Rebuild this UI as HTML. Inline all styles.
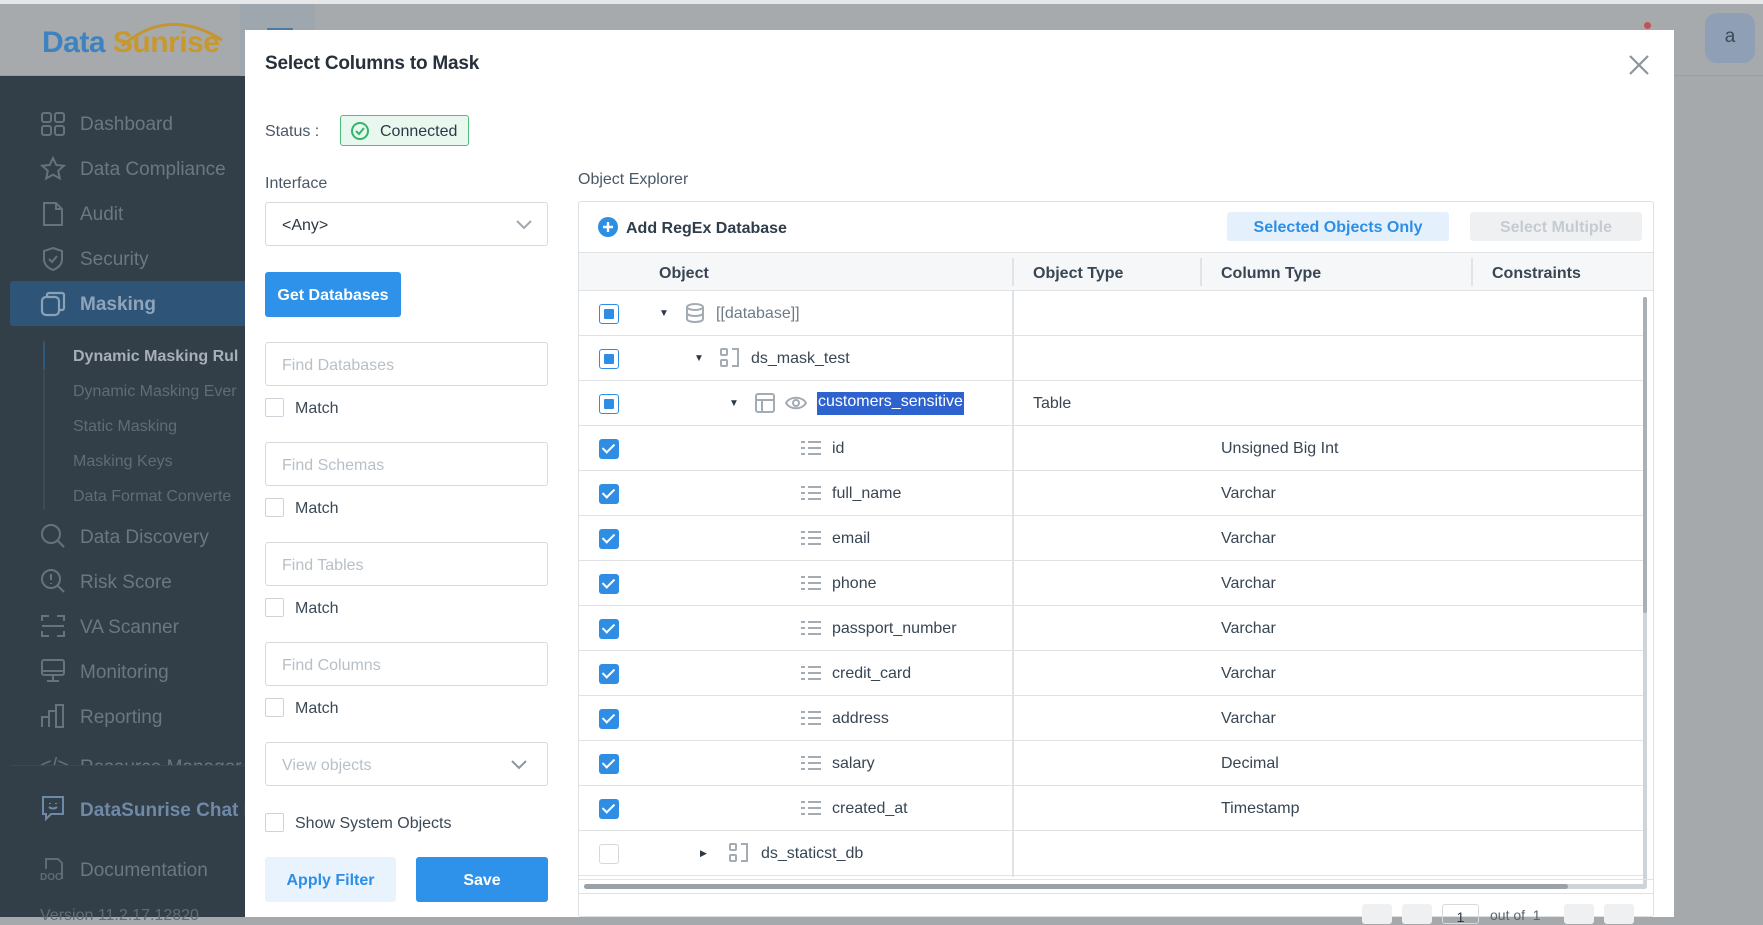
<!DOCTYPE html>
<html><head><meta charset="utf-8"><style>
*{box-sizing:border-box;margin:0;padding:0}
body{width:1763px;height:917px;overflow:hidden;position:relative;background:#a5a9ac;font-family:"Liberation Sans",sans-serif;color:#2b3a48}
.a{position:absolute}
.top{left:0;top:0;width:1763px;height:4px;background:#e6e7e8}
.hdr{left:0;top:4px;width:1763px;height:72px;background:#a6aaad;border-bottom:1px solid #9a9ea1}
.side{left:0;top:76px;width:245px;height:841px;background:#323e48}
.nav{left:80px;font-size:19px;color:#6a7884;white-space:nowrap;margin-top:2px}
.sub{left:73px;font-size:16px;color:#5f6d79;white-space:nowrap;margin-top:2px}
.ico{left:40px;width:26px;height:26px}
.modal{left:245px;top:30px;width:1429px;height:887px;background:#fff}
.lbl{font-size:16px;color:#4a5866;margin-top:2px}
.inp{left:265px;width:283px;height:44px;border:1px solid #d6dadd;border-radius:3px;font-size:16px;color:#b8c0c7;padding:14px 16px 0}
.cb{width:19px;height:19px;border:1px solid #cdd3d8;border-radius:2px;background:#fff}
.mt{font-size:16px;color:#3b4956;margin-top:2px}
.tb{left:578px;top:201px;width:1076px;height:716px;border:1px solid #dde1e4;border-radius:3px}
.row{left:579px;width:1066px;height:45px;border-bottom:1px solid #dfe3e6}
.rt{font-size:16px;color:#384654;white-space:nowrap;margin-top:2px}
.ck{left:599px;width:20px;height:20px;border-radius:3px}
.on{background:#2f8de4}
.part{border:1px solid #2f8de4;background:#fff}
.part::after{content:"";position:absolute;left:4px;top:4px;width:10px;height:10px;background:#2f8de4;border-radius:1px}
.on::after{content:"";position:absolute;left:6px;top:2px;width:5px;height:10px;border:solid #fff;border-width:0 2px 2px 0;transform:rotate(45deg)}
.lst{width:22px;height:16px}
</style></head><body>
<div class="a top"></div>
<div class="a hdr"></div>
<div class="a" style="left:240px;top:4px;width:75px;height:72px;background:#9ea6ae"></div>
<div class="a" style="left:267px;top:28px;width:26px;height:4px;background:#4b7aa5"></div>
<div class="a" style="left:1705px;top:13px;width:50px;height:50px;border-radius:12px;background:#8e9fb6;font-size:19px;color:#3b4a58;text-align:center;line-height:48px">a</div>
<div class="a" style="left:1644px;top:22px;width:7px;height:7px;border-radius:50%;background:#c0525a"></div>
<svg class="a" style="left:118px;top:12px" width="110" height="40"><path d="M4 34 Q50 -6 104 28" fill="none" stroke="#c49531" stroke-width="3"/></svg>
<div class="a" style="left:42px;top:26px;font-size:30px;font-weight:bold;white-space:nowrap;letter-spacing:-0.5px"><span style="color:#3e83bf">Data</span> <span style="color:#c8982e">Sunrise</span></div>
<div class="a side"></div>
<div class="a" style="left:10px;top:281px;width:235px;height:45px;background:#2e5478;border-radius:3px 0 0 3px"></div>
<div class="a" style="left:43px;top:340px;width:2px;height:170px;background:#3d4955"></div>
<div class="a" style="left:43px;top:343px;width:2px;height:26px;background:#2f5a80"></div>
<svg class="a ico" style="top:111px" viewBox="0 0 26 26" fill="none" stroke="#66737f" stroke-width="2"><rect x="2" y="2" width="9" height="9" rx="2"/><rect x="15" y="2" width="9" height="9" rx="2"/><rect x="2" y="15" width="9" height="9" rx="2"/><rect x="15" y="15" width="9" height="9" rx="2"/></svg>
<div class="a nav" style="top:112px">Dashboard</div>
<svg class="a ico" style="top:156px" viewBox="0 0 26 26" fill="none" stroke="#66737f" stroke-width="2"><path d="M13 2l3.3 7 7.5.8-5.6 5 1.6 7.6L13 18.6l-6.8 3.8 1.6-7.6-5.6-5 7.5-.8z"/></svg>
<div class="a nav" style="top:157px">Data Compliance</div>
<svg class="a ico" style="top:201px" viewBox="0 0 26 26" fill="none" stroke="#66737f" stroke-width="2"><path d="M4 2h12l6 6v16H4z M16 2v6h6"/></svg>
<div class="a nav" style="top:202px">Audit</div>
<svg class="a ico" style="top:246px" viewBox="0 0 26 26" fill="none" stroke="#66737f" stroke-width="2"><path d="M13 2l9 3v8c0 6-4 9-9 11-5-2-9-5-9-11V5z M9 13l3 3 5-6"/></svg>
<div class="a nav" style="top:247px">Security</div>
<svg class="a ico" style="top:291px" viewBox="0 0 26 26" fill="none" stroke="#8aa2b8" stroke-width="2.2"><rect x="2" y="6" width="17" height="18" rx="4"/><path d="M7 6V4a2 2 0 0 1 2-2h13a2 2 0 0 1 2 2v13a2 2 0 0 1-2 2h-3"/></svg>
<div class="a nav" style="top:292px;color:#8ea4ba;font-weight:bold">Masking</div>
<div class="a sub" style="top:346px;color:#a7b0b9;font-weight:bold">Dynamic Masking Rul</div>
<div class="a sub" style="top:381px">Dynamic Masking Ever</div>
<div class="a sub" style="top:416px">Static Masking</div>
<div class="a sub" style="top:451px">Masking Keys</div>
<div class="a sub" style="top:486px">Data Format Converte</div>
<svg class="a ico" style="top:523px" viewBox="0 0 26 26" fill="none" stroke="#66737f" stroke-width="2"><circle cx="11" cy="11" r="9"/><path d="M18 18l6 6"/></svg>
<div class="a nav" style="top:525px">Data Discovery</div>
<svg class="a ico" style="top:568px" viewBox="0 0 26 26" fill="none" stroke="#66737f" stroke-width="2"><circle cx="11" cy="11" r="9"/><path d="M18 18l6 6 M11 6v6 M11 15v1"/></svg>
<div class="a nav" style="top:570px">Risk Score</div>
<svg class="a ico" style="top:613px" viewBox="0 0 26 26" fill="none" stroke="#66737f" stroke-width="2"><path d="M2 8V3h7 M17 3h7v5 M2 18v5h7 M17 23h7v-5 M2 13h22"/></svg>
<div class="a nav" style="top:615px">VA Scanner</div>
<svg class="a ico" style="top:658px" viewBox="0 0 26 26" fill="none" stroke="#66737f" stroke-width="2"><rect x="2" y="2" width="22" height="15" rx="2"/><path d="M13 17v5 M7 23h12 M2 13h22"/></svg>
<div class="a nav" style="top:660px">Monitoring</div>
<svg class="a ico" style="top:703px" viewBox="0 0 26 26" fill="none" stroke="#66737f" stroke-width="2"><path d="M2 24V14h7v10 M9 24V8h7v16 M16 24V2h7v22z"/></svg>
<div class="a nav" style="top:705px">Reporting</div>
<div class="a" style="left:0;top:750px;width:245px;height:15px;overflow:hidden"><div class="a nav" style="left:80px;top:5px">Resource Manager</div><div class="a" style="left:40px;top:5px;color:#66737f;font-size:20px">&lt;/&gt;</div></div>
<div class="a" style="left:10px;top:765px;width:235px;height:1px;background:#3b4751"></div>
<svg class="a ico" style="top:795px" viewBox="0 0 26 26" fill="none" stroke="#6f8aa8" stroke-width="2"><path d="M3 2h20v17H11l-5 5v-5H3z M10 8v1 M16 8v1 M9 12c2 2 6 2 8 0"/></svg>
<div class="a nav" style="top:798px;color:#6f89a6;font-weight:bold">DataSunrise Chat B</div>
<svg class="a ico" style="top:855px" viewBox="0 0 26 26" fill="none" stroke="#5f6c78" stroke-width="2"><path d="M6 14V4h12l4 4v16"/></svg>
<div class="a" style="left:40px;top:872px;font-size:10px;font-weight:bold;color:#5f6c78">DOC</div>
<div class="a nav" style="top:858px">Documentation</div>
<div class="a sub" style="left:40px;top:905px;font-size:16px">Version 11.2.17.12820</div>

<div class="a modal"></div>
<div class="a" style="left:265px;top:53px;font-size:19px;font-weight:bold;color:#26313c;letter-spacing:-0.2px">Select Columns to Mask</div>
<svg class="a" style="left:1628px;top:54px" width="22" height="22"><path d="M2 2l18 18M20 2L2 20" stroke="#8d949b" stroke-width="2.2"/></svg>
<div class="a lbl" style="left:265px;top:121px">Status :</div>
<div class="a" style="left:340px;top:115px;width:129px;height:31px;border:1px solid #4cc07a;border-radius:3px;background:#e9f8ee"></div>
<svg class="a" style="left:350px;top:121px" width="20" height="20" fill="none" stroke="#34b56a" stroke-width="2"><circle cx="10" cy="10" r="8"/><path d="M6 10l3 3 5-6"/></svg>
<div class="a" style="left:380px;top:123px;font-size:16px;color:#2d3a46">Connected</div>
<div class="a lbl" style="left:265px;top:173px">Interface</div>
<div class="a inp" style="top:202px;color:#2b3845">&lt;Any&gt;</div>
<svg class="a" style="left:516px;top:220px" width="16" height="10" fill="none" stroke="#a0a8b0" stroke-width="2"><path d="M1 1l7 7 7-7"/></svg>
<div class="a" style="left:265px;top:272px;width:136px;height:45px;background:#2e92ea;border-radius:3px;color:#fff;font-weight:bold;font-size:16px;text-align:center;line-height:47px">Get Databases</div>
<div class="a inp" style="top:342px">Find Databases</div>
<div class="a cb" style="left:265px;top:398px"></div><div class="a mt" style="left:295px;top:398px">Match</div>
<div class="a inp" style="top:442px">Find Schemas</div>
<div class="a cb" style="left:265px;top:498px"></div><div class="a mt" style="left:295px;top:498px">Match</div>
<div class="a inp" style="top:542px">Find Tables</div>
<div class="a cb" style="left:265px;top:598px"></div><div class="a mt" style="left:295px;top:598px">Match</div>
<div class="a inp" style="top:642px">Find Columns</div>
<div class="a cb" style="left:265px;top:698px"></div><div class="a mt" style="left:295px;top:698px">Match</div>
<div class="a inp" style="top:742px">View objects</div>
<svg class="a" style="left:511px;top:760px" width="16" height="10" fill="none" stroke="#8d959d" stroke-width="2"><path d="M1 1l7 7 7-7"/></svg>
<div class="a cb" style="left:265px;top:813px"></div><div class="a mt" style="left:295px;top:813px">Show System Objects</div>
<div class="a" style="left:265px;top:857px;width:131px;height:45px;background:#e8f3fd;border-radius:3px;color:#2e8ee4;font-weight:bold;font-size:16px;text-align:center;line-height:47px">Apply Filter</div>
<div class="a" style="left:416px;top:857px;width:132px;height:45px;background:#2e92ea;border-radius:3px;color:#fff;font-weight:bold;font-size:16px;text-align:center;line-height:47px">Save</div>

<div class="a lbl" style="left:578px;top:169px">Object Explorer</div>
<div class="a tb"></div>
<svg class="a" style="left:598px;top:217px" width="20" height="20"><circle cx="10" cy="10" r="10" fill="#2e8ee4"/><path d="M10 5v10M5 10h10" stroke="#fff" stroke-width="2.4"/></svg>
<div class="a" style="left:626px;top:220px;font-size:16px;font-weight:bold;color:#2f3d4a">Add RegEx Database</div>
<div class="a" style="left:1227px;top:212px;width:222px;height:29px;background:#e4f1fd;border-radius:3px;color:#2e8ee4;font-weight:bold;font-size:16px;text-align:center;line-height:31px">Selected Objects Only</div>
<div class="a" style="left:1470px;top:212px;width:172px;height:29px;background:#eef0f2;border-radius:3px;color:#c5cbd1;font-weight:bold;font-size:16px;text-align:center;line-height:31px">Select Multiple</div>
<div class="a" style="left:579px;top:252px;width:1074px;height:39px;background:#f6f7f8;border-top:1px solid #dfe3e6;border-bottom:1px solid #dfe3e6"></div>
<div class="a" style="left:1012px;top:258px;width:2px;height:28px;background:#e0e4e7"></div>
<div class="a" style="left:1200px;top:258px;width:2px;height:28px;background:#e0e4e7"></div>
<div class="a" style="left:1471px;top:258px;width:2px;height:28px;background:#e0e4e7"></div>
<div class="a rt" style="left:659px;top:263px;font-weight:bold">Object</div>
<div class="a rt" style="left:1033px;top:263px;font-weight:bold">Object Type</div>
<div class="a rt" style="left:1221px;top:263px;font-weight:bold">Column Type</div>
<div class="a rt" style="left:1492px;top:263px;font-weight:bold">Constraints</div>
<div class="a" style="left:1012px;top:291px;width:2px;height:586px;background:#dfe3e6"></div>

<div class="a row" style="top:291px"></div>
<div class="a ck part" style="top:304px"></div>
<div class="a" style="left:659px;top:308px;font-size:10px;color:#2b3845">▼</div>
<svg class="a" style="left:684px;top:302px" width="22" height="22" fill="none" stroke="#a3abb3" stroke-width="2"><ellipse cx="11" cy="5" rx="8" ry="3"/><path d="M3 5v12c0 2 4 3 8 3s8-1 8-3V5 M3 11c0 2 4 3 8 3s8-1 8-3"/></svg>
<div class="a rt" style="left:716px;top:303px;color:#6e7b87">[[database]]</div>

<div class="a row" style="top:336px"></div>
<div class="a ck part" style="top:349px"></div>
<div class="a" style="left:694px;top:353px;font-size:10px;color:#2b3845">▼</div>
<svg class="a" style="left:719px;top:347px" width="22" height="22" fill="none" stroke="#a3abb3" stroke-width="2"><rect x="2" y="2" width="6" height="6" rx="1"/><rect x="2" y="13" width="6" height="6" rx="1"/><path d="M13 2h6v17h-6"/></svg>
<div class="a rt" style="left:751px;top:348px">ds_mask_test</div>

<div class="a row" style="top:381px"></div>
<div class="a ck part" style="top:394px"></div>
<div class="a" style="left:729px;top:398px;font-size:10px;color:#2b3845">▼</div>
<svg class="a" style="left:754px;top:392px" width="22" height="22" fill="none" stroke="#a3abb3" stroke-width="2"><rect x="2" y="2" width="18" height="18" rx="2"/><path d="M2 8h18 M8 8v12"/></svg>
<svg class="a" style="left:785px;top:394px" width="22" height="18" fill="none" stroke="#a3abb3" stroke-width="2"><path d="M1 9c4-7 16-7 20 0-4 7-16 7-20 0z"/><circle cx="11" cy="9" r="3"/></svg>
<div class="a rt" style="left:817px;top:392px;background:#2e62cf;color:#fff;padding:1px 1px;height:23px;margin-top:0">customers_sensitive</div>
<div class="a rt" style="left:1033px;top:393px">Table</div>

<div class="a row" style="top:426px"></div><div class="a ck on" style="top:439px"></div>
<svg class="a lst" style="left:800px;top:440px" fill="none" stroke="#a3abb3" stroke-width="2"><path d="M1 2h4M1 8h4M1 14h4M8 2h13M8 8h13M8 14h13"/></svg>
<div class="a rt" style="left:832px;top:438px">id</div><div class="a rt" style="left:1221px;top:438px">Unsigned Big Int</div>

<div class="a row" style="top:471px"></div><div class="a ck on" style="top:484px"></div>
<svg class="a lst" style="left:800px;top:485px" fill="none" stroke="#a3abb3" stroke-width="2"><path d="M1 2h4M1 8h4M1 14h4M8 2h13M8 8h13M8 14h13"/></svg>
<div class="a rt" style="left:832px;top:483px">full_name</div><div class="a rt" style="left:1221px;top:483px">Varchar</div>

<div class="a row" style="top:516px"></div><div class="a ck on" style="top:529px"></div>
<svg class="a lst" style="left:800px;top:530px" fill="none" stroke="#a3abb3" stroke-width="2"><path d="M1 2h4M1 8h4M1 14h4M8 2h13M8 8h13M8 14h13"/></svg>
<div class="a rt" style="left:832px;top:528px">email</div><div class="a rt" style="left:1221px;top:528px">Varchar</div>

<div class="a row" style="top:561px"></div><div class="a ck on" style="top:574px"></div>
<svg class="a lst" style="left:800px;top:575px" fill="none" stroke="#a3abb3" stroke-width="2"><path d="M1 2h4M1 8h4M1 14h4M8 2h13M8 8h13M8 14h13"/></svg>
<div class="a rt" style="left:832px;top:573px">phone</div><div class="a rt" style="left:1221px;top:573px">Varchar</div>

<div class="a row" style="top:606px"></div><div class="a ck on" style="top:619px"></div>
<svg class="a lst" style="left:800px;top:620px" fill="none" stroke="#a3abb3" stroke-width="2"><path d="M1 2h4M1 8h4M1 14h4M8 2h13M8 8h13M8 14h13"/></svg>
<div class="a rt" style="left:832px;top:618px">passport_number</div><div class="a rt" style="left:1221px;top:618px">Varchar</div>

<div class="a row" style="top:651px"></div><div class="a ck on" style="top:664px"></div>
<svg class="a lst" style="left:800px;top:665px" fill="none" stroke="#a3abb3" stroke-width="2"><path d="M1 2h4M1 8h4M1 14h4M8 2h13M8 8h13M8 14h13"/></svg>
<div class="a rt" style="left:832px;top:663px">credit_card</div><div class="a rt" style="left:1221px;top:663px">Varchar</div>

<div class="a row" style="top:696px"></div><div class="a ck on" style="top:709px"></div>
<svg class="a lst" style="left:800px;top:710px" fill="none" stroke="#a3abb3" stroke-width="2"><path d="M1 2h4M1 8h4M1 14h4M8 2h13M8 8h13M8 14h13"/></svg>
<div class="a rt" style="left:832px;top:708px">address</div><div class="a rt" style="left:1221px;top:708px">Varchar</div>

<div class="a row" style="top:741px"></div><div class="a ck on" style="top:754px"></div>
<svg class="a lst" style="left:800px;top:755px" fill="none" stroke="#a3abb3" stroke-width="2"><path d="M1 2h4M1 8h4M1 14h4M8 2h13M8 8h13M8 14h13"/></svg>
<div class="a rt" style="left:832px;top:753px">salary</div><div class="a rt" style="left:1221px;top:753px">Decimal</div>

<div class="a row" style="top:786px"></div><div class="a ck on" style="top:799px"></div>
<svg class="a lst" style="left:800px;top:800px" fill="none" stroke="#a3abb3" stroke-width="2"><path d="M1 2h4M1 8h4M1 14h4M8 2h13M8 8h13M8 14h13"/></svg>
<div class="a rt" style="left:832px;top:798px">created_at</div><div class="a rt" style="left:1221px;top:798px">Timestamp</div>

<div class="a row" style="top:831px"></div>
<div class="a ck" style="top:844px;border:1px solid #d3d8dc;background:#fff"></div>
<div class="a" style="left:700px;top:848px;font-size:9px;color:#2b3845">▶</div>
<svg class="a" style="left:728px;top:842px" width="22" height="22" fill="none" stroke="#a3abb3" stroke-width="2"><rect x="2" y="2" width="6" height="6" rx="1"/><rect x="2" y="13" width="6" height="6" rx="1"/><path d="M13 2h6v17h-6"/></svg>
<div class="a rt" style="left:761px;top:843px">ds_staticst_db</div>

<div class="a" style="left:1643px;top:297px;width:4px;height:590px;background:#cfd4d8;border-radius:2px"></div>
<div class="a" style="left:1643px;top:297px;width:4px;height:316px;background:#a9b0b6;border-radius:2px"></div>
<div class="a" style="left:579px;top:879px;width:1074px;height:1px;background:#dfe3e6"></div>
<div class="a" style="left:584px;top:884px;width:1063px;height:5px;background:#cfd4d8;border-radius:3px"></div>
<div class="a" style="left:584px;top:884px;width:984px;height:5px;background:#9aa1a7;border-radius:3px"></div>
<div class="a" style="left:579px;top:893px;width:1074px;height:1px;background:#dfe3e6"></div>
<div class="a" style="left:1362px;top:904px;width:30px;height:20px;background:#eef0f2;border-radius:3px"></div>
<div class="a" style="left:1402px;top:904px;width:30px;height:20px;background:#eef0f2;border-radius:3px"></div>
<div class="a" style="left:1442px;top:904px;width:37px;height:20px;border:1px solid #d6dadd;border-radius:3px;font-size:14px;text-align:center;padding-top:4px">1</div>
<div class="a" style="left:1490px;top:907px;font-size:14px;color:#5a6672">out of&nbsp;&nbsp;1</div>
<div class="a" style="left:1564px;top:904px;width:30px;height:20px;background:#eef0f2;border-radius:3px"></div>
<div class="a" style="left:1604px;top:904px;width:30px;height:20px;background:#eef0f2;border-radius:3px"></div>
</body></html>
